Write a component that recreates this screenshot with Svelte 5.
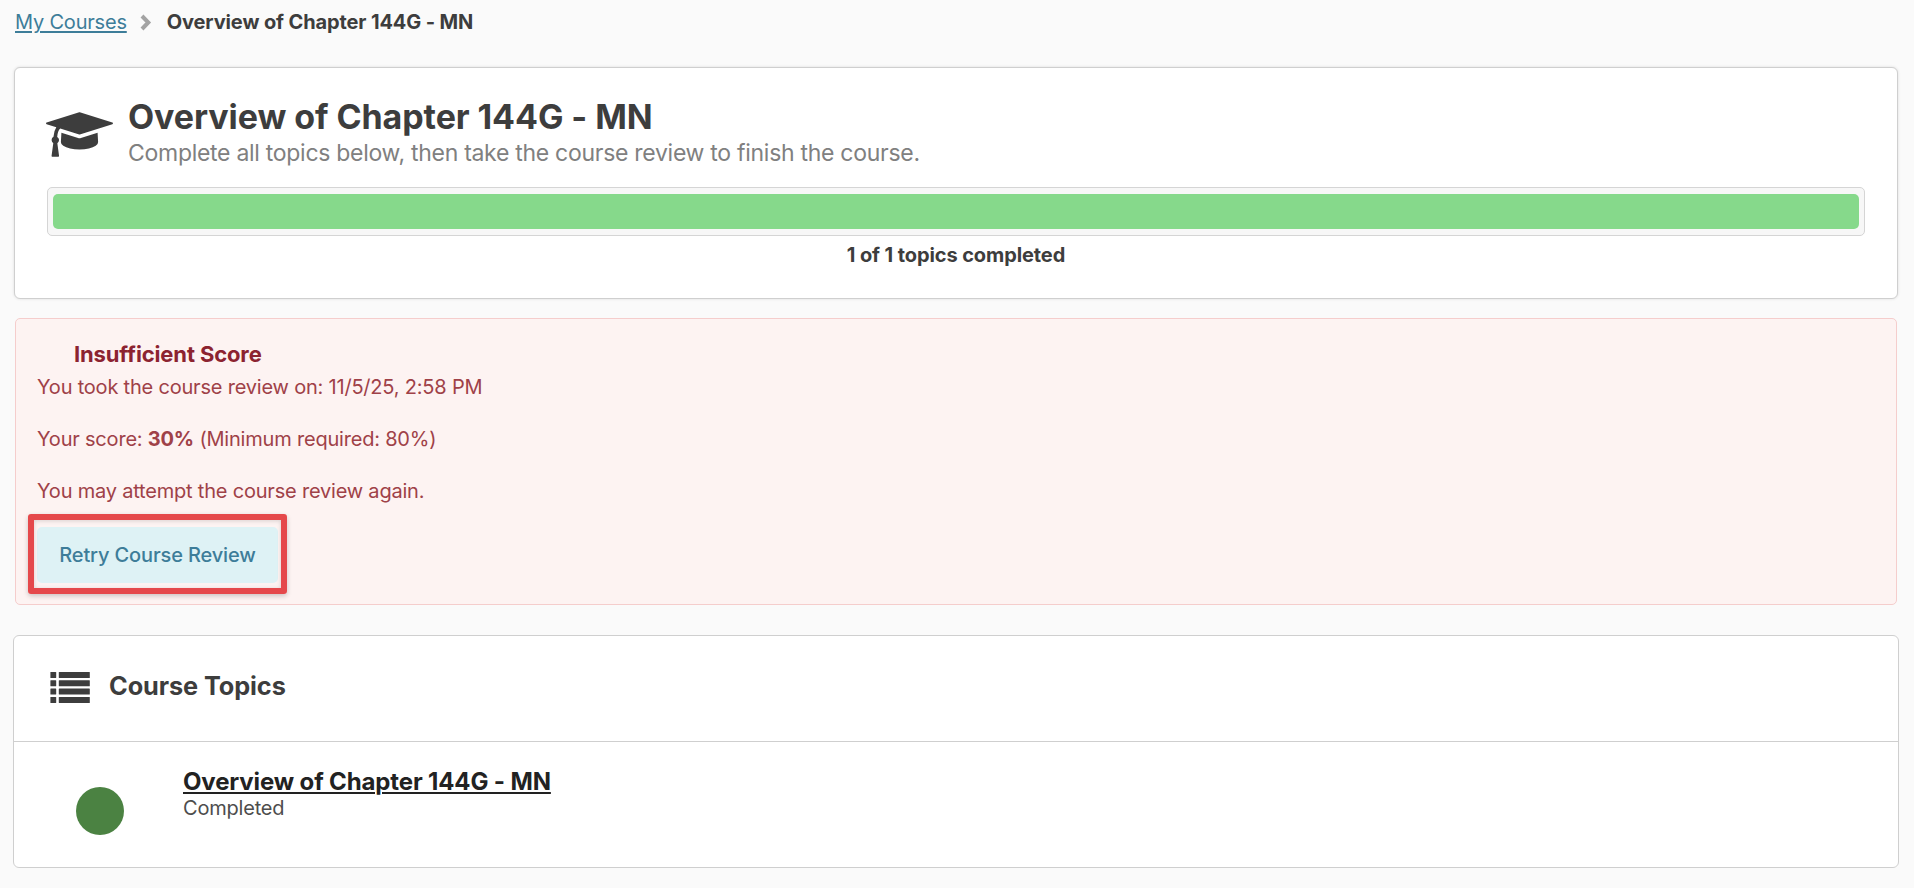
<script>
    let courseTitle = "Overview of Chapter 144G - MN";
    let completed = 1;
    let total = 1;
    let score = 30;
    let minimumScore = 80;
    let reviewDate = "11/5/25, 2:58 PM";
    let topics = [{ title: courseTitle, status: "Completed" }];
</script>

<nav class="breadcrumb">
    <a href="#courses">My Courses</a>
    <svg class="chevron" viewBox="0 0 12 17" aria-hidden="true">
        <path d="M2 2l6.300 6.500L2 15" />
    </svg>
    <strong>{courseTitle}</strong>
</nav>

<section class="card course">
    <div class="course-header">
        <svg class="cap" viewBox="0 128 2304 1536" aria-hidden="true">
            <path
                d="M1774 836l18 316q4 69-82 128t-235 93.500-323 34.500-323-34.500-235-93.500-82-128l18-316 574 181q22 7 48 7t48-7zM2304 512q0 23-22 31l-1120 352q-4 1-10 1t-10-1l-652-206q-43 34-71 111.500t-34 178.500q63 36 63 109 0 69-58 107l58 433q2 14-8 25-9 11-24 11h-192q-15 0-24-11-10-11-8-25l58-433q-58-38-58-107 0-73 65-111 11-207 98-330l-333-104q-22-8-22-31t22-31l1120-352q4-1 10-1t10 1l1120 352q22 8 22 31z"
            />
        </svg>
        <div>
            <h1>{courseTitle}</h1>
            <div class="subtitle">
                Complete all topics below, then take the course review to finish
                the course.
            </div>
        </div>
    </div>
    <div class="progress">
        <div class="bar" style="width: {(completed / total) * 100}%"></div>
    </div>
    <div class="count">{completed} of {total} topics completed</div>
</section>

<section class="alert">
    <h3>Insufficient Score</h3>
    <p>You took the course review on: {reviewDate}</p>
    <p>Your score: <b>{score}%</b> (Minimum required: {minimumScore}%)</p>
    <p>You may attempt the course review again.</p>
    <div class="retry">
        <button>Retry Course Review</button>
        <span class="highlight"></span>
    </div>
</section>

<section class="card topics">
    <header>
        <svg class="list" viewBox="0 0 40 31" aria-hidden="true">
            {#each [0, 8.3, 16.6, 25] as y}
                <rect x="0.400" {y} width="5.800" height="6" rx="0.5" />
                <rect x="8.800" {y} width="31" height="6" rx="0.5" />
            {/each}
        </svg>
        <h2>Course Topics</h2>
    </header>
    {#each topics as topic}
        <div class="topic">
            <span class="dot"></span>
            <div>
                <a href="#topic">{topic.title}</a>
                <div class="topic-status">{topic.status}</div>
            </div>
        </div>
    {/each}
</section>

<style>
    :global(body) {
        margin: 0;
        background: #fafafa;
        color: #3d3d3d;
        font-family: Inter, "Liberation Sans", sans-serif;
        font-size: 20px;
        line-height: 26px;
        letter-spacing: -0.2px;
    }

    h1,
    h2,
    h3,
    p {
        margin: 0;
    }

    .breadcrumb {
        display: flex;
        align-items: center;
        height: 26px;
        padding: 9px 15px 32px;
    }

    .breadcrumb a {
        color: #3d7d99;
        text-decoration-thickness: 2px;
        text-underline-offset: 2px;
    }

    .breadcrumb strong {
        letter-spacing: -0.12px;
    }

    .chevron {
        width: 12px;
        height: 17px;
        margin: 0 14.5px 0 13.5px;
        fill: none;
        stroke: #a3a3a3;
        stroke-width: 4;
    }

    .card {
        box-sizing: border-box;
        background: #fff;
        border: 1px solid #cfcfcf;
        border-radius: 6px;
    }

    .course {
        height: 232px;
        margin: 0 16px 0 14px;
        padding: 28px 32px 0;
        box-shadow: 0 0 3px rgba(0, 0, 0, 0.12);
    }

    .course-header {
        display: flex;
        height: 91px;
    }

    .cap {
        width: 67px;
        height: 45px;
        margin: 16px 15px 0 -1px;
        fill: #3d3d3d;
    }

    h1 {
        font-size: 34px;
        line-height: 42px;
        letter-spacing: -0.08px;
    }

    .subtitle {
        color: #808080;
        font-size: 23px;
        line-height: 30px;
        letter-spacing: -0.285px;
    }

    .progress {
        box-sizing: border-box;
        height: 49px;
        padding: 6px 5px;
        background: #f7f7f7;
        border: 1px solid #d5d5d5;
        border-radius: 5px;
    }

    .bar {
        height: 35px;
        background: #86d98b;
        border-radius: 5px;
    }

    .count {
        margin-top: 6px;
        font-weight: 700;
        letter-spacing: -0.1px;
        text-align: center;
    }

    .alert {
        box-sizing: border-box;
        height: 287px;
        margin: 19px 17px 30px 15px;
        padding: 22px 21px 0;
        background: #fdf3f2;
        border: 1px solid #f5cdcc;
        border-radius: 5px;
        color: #9f4148;
    }

    h3 {
        padding-left: 37px;
        color: #8c2330;
        font-size: 22px;
        line-height: 26px;
        letter-spacing: -0.13px;
    }

    .alert p {
        margin: 7px 0 26px;
    }

    .alert p + p {
        margin: 26px 0;
    }

    .retry {
        position: relative;
        display: inline-block;
        margin-top: -3px;
    }

    button {
        width: 241px;
        height: 56px;
        padding: 0;
        background: #def2f5;
        border: 0;
        border-radius: 5px;
        color: #3d7d99;
        font: 500 20px Inter, sans-serif;
        letter-spacing: -0.14px;
    }

    .highlight {
        position: absolute;
        top: -13px;
        left: -9px;
        width: 247px;
        height: 68px;
        border: 6px solid #e5484b;
        border-radius: 3px;
        box-shadow:
            0 2px 5px rgba(0, 0, 0, 0.2),
            inset 0 1px 4px rgba(0, 0, 0, 0.15);
    }

    .topics {
        height: 233px;
        margin: 0 15px 0 13px;
    }

    .topics header {
        display: flex;
        align-items: flex-start;
        height: 105px;
        border-bottom: 1px solid #cfcfcf;
    }

    .list {
        width: 40px;
        height: 31px;
        margin: 36px 19px 0 36px;
        fill: #3d3d3d;
    }

    h2 {
        margin-top: 34px;
        font-size: 25.3px;
        line-height: 32px;
        letter-spacing: -0.08px;
    }

    .topic {
        display: flex;
        padding-top: 25px;
    }

    .dot {
        width: 48px;
        height: 48px;
        margin: 20px 59px 0 62px;
        background: #4b8242;
        border-radius: 50%;
    }

    .topic a {
        color: #222;
        font-size: 24px;
        font-weight: 700;
        line-height: 30px;
        letter-spacing: -0.14px;
        text-decoration-thickness: 2px;
        text-underline-offset: 2px;
    }

    .topic-status {
        margin-top: -2px;
        color: #4d4d4d;
    }
</style>
